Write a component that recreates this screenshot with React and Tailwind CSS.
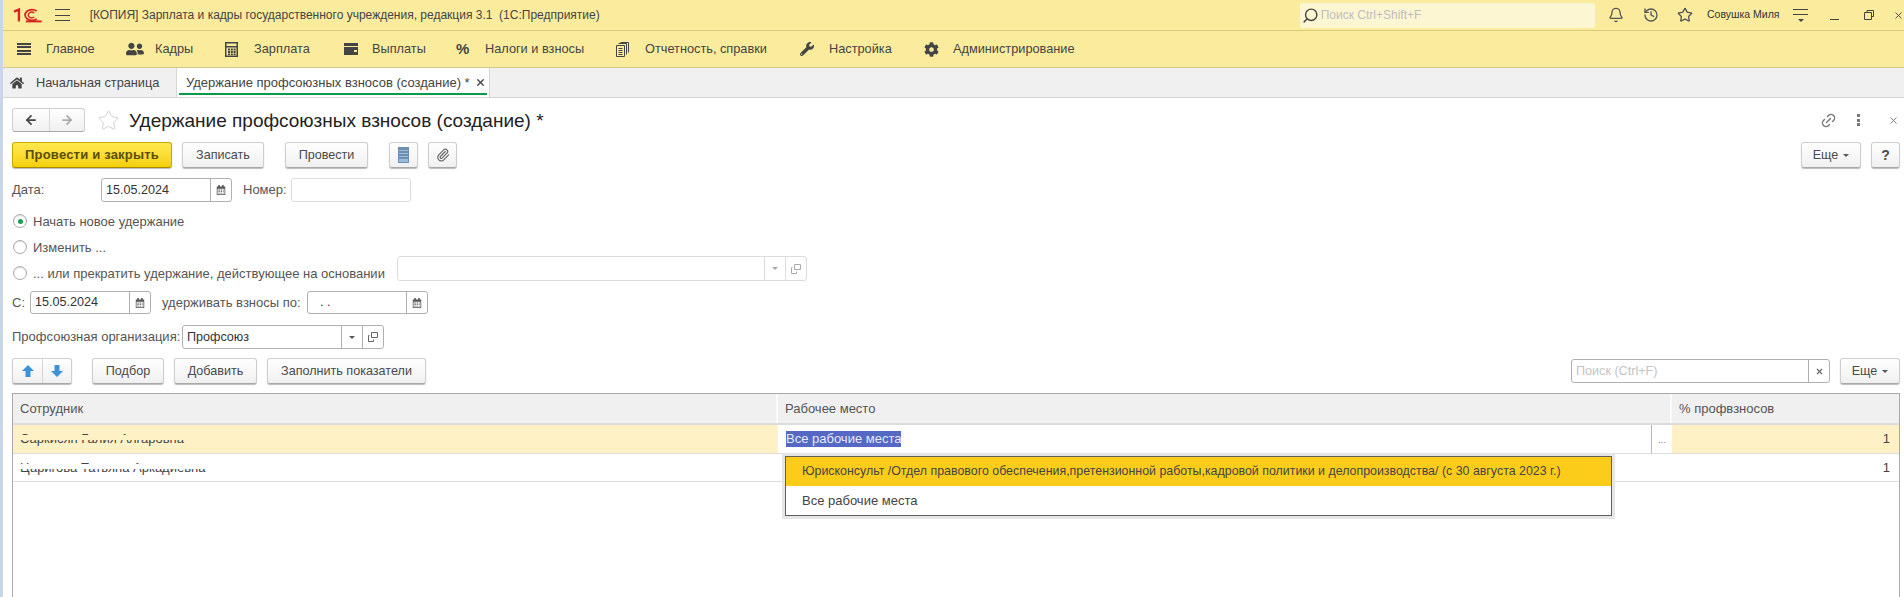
import React from 'react';
import { FaHome, FaWrench, FaCog, FaUserFriends } from 'react-icons/fa';
import { Bell, History, Star, Link2, Search, X, Paperclip, ArrowLeft, ArrowRight } from 'lucide-react';

const Logo = () => (
  <svg width="30" height="16" viewBox="0 0 30 16" fill="none" stroke="#d8231f">
    <path d="M1 4.5 L6 2.5 V14.5" strokeWidth="2.4" />
    <path d="M24 4 A7 5.5 0 1 0 24 12" strokeWidth="1.8" />
    <path d="M21.5 6 A3.6 2.8 0 1 0 21.5 10" strokeWidth="1.4" />
    <path d="M13 14.5 H29" strokeWidth="2" />
  </svg>
);

const Burger = ({ bar = 'h-[1px] bg-[#444]', gap = 'gap-[4.5px]' }) => (
  <div className={`flex flex-col w-[15px] ${gap}`}>
    <div className={bar} />
    <div className={bar} />
    <div className={bar} />
  </div>
);

const MainMenu = () => (
  <div className="flex flex-col w-[14px] gap-[1.5px]">
    <div className="h-[2px] bg-[#444]" />
    <div className="h-[2px] bg-[#444]" />
    <div className="h-[2px] bg-[#444]" />
    <div className="h-[2px] bg-[#444]" />
  </div>
);

const CalcIcon = () => (
  <svg width="13" height="15" viewBox="0 0 13 15" fill="#444">
    <path d="M0 0h13v15H0z M1.5 1.5v2.5h10V1.5z M1.5 5.5v8h10v-8z" fillRule="evenodd" />
    <path d="M3 6.5h2v2H3zM5.8 6.5h2v2h-2zM8.6 6.5h2v2h-2zM3 9h2v2H3zM5.8 9h2v2h-2zM8.6 9h2v2h-2zM3 11.5h2v1.5H3zM5.8 11.5h2v1.5h-2zM8.6 11.5h2v1.5h-2z" />
  </svg>
);

const ReportIcon = () => (
  <svg width="13" height="15" viewBox="0 0 13 15" fill="none" stroke="#444">
    <path d="M0.5 3.5h8v11h-8z" />
    <path d="M2.5 6.5h4M2.5 8.5h4M2.5 10.5h4M2.5 12.5h4" />
    <path d="M2.5 1.5h8v11M4.5 0.5h8v10" />
  </svg>
);

const Wallet = () => (
  <svg width="16" height="12" viewBox="0 0 16 12" fill="#444">
    <path d="M1 0h14v3H1z" />
    <path d="M1 4h14v8H1z M11 7v2h3V7z" fillRule="evenodd" />
  </svg>
);

const RestoreIcon = () => (
  <svg width="10" height="10" viewBox="0 0 10 10" fill="none" stroke="#444">
    <path d="M3 2.5v-2h6.5v6h-2" />
    <path d="M0.5 2.5h7v7h-7z" />
  </svg>
);

const CalendarIcon = () => (
  <svg width="10" height="10" viewBox="0 0 13 13" fill="#555">
    <path d="M3 0h2v2h3V0h2v2h2v11H1V2h2z M2 5v7h9V5z" fillRule="evenodd" />
    <path d="M3 6h2v1H3zM6 6h2v1H6zM9 6h1v1H9zM3 8h2v1H3zM6 8h2v1H6zM9 8h1v1H9zM3 10h2v1H3zM6 10h2v1H6zM9 10h1v1H9z" />
  </svg>
);

const OpenIcon = ({ color = '#666' }) => (
  <svg width="10" height="10" viewBox="0 0 10 10" fill="none" stroke={color}>
    <path d="M3.5 0.5h6v5h-6z" />
    <path d="M1.5 3.5h-1v6h5v-2" />
  </svg>
);

const Caret = ({ color = '#555' }) => (
  <div className="w-0 h-0 border-x-[3px] border-x-transparent border-t-[3px]" style={{ borderTopColor: color }} />
);

const ArrowBlue = ({ down }) => (
  <svg width="14" height="14" viewBox="0 0 14 14" fill="#3b94d9" className={down ? 'rotate-180' : ''}>
    <path d="M7 1 L13 7 H9.5 V13 H4.5 V7 H1 Z" />
  </svg>
);

const Btn = ({ className = '', children }) => (
  <div className={`flex items-center justify-center h-[26px] rounded-[3px] border border-[#cfcfcf] border-b-[#a8a8a8] bg-gradient-to-b from-white to-[#f0f0f0] shadow-[0_1px_1px_#bbb] text-[12.6px] text-[#4a4a4a] ${className}`}>
    {children}
  </div>
);

const Field = ({ className = '', value, parts = [], light }) => (
  <div className={`flex h-full rounded-[3px] border bg-white text-[12.6px] text-[#333] ${light ? 'border-[#dcdcdc]' : 'border-[#b0b0b0]'} ${className}`}>
    <div className="flex-1 flex items-center pl-[4px] overflow-hidden">{value}</div>
    {parts.map((part, index) => (
      <div key={index} className={`w-[21px] flex items-center justify-center border-l ${light ? 'border-[#dcdcdc]' : 'border-[#b0b0b0]'}`}>
        {part}
      </div>
    ))}
  </div>
);

const Radio = ({ checked, label }) => (
  <div className="flex items-center">
    <div className="w-[14px] h-[14px] ml-[1px] rounded-full border border-[#a9a9a9] bg-white flex items-center justify-center shadow-[inset_0_1px_1px_#ddd]">
      {checked && <div className="w-[5px] h-[5px] rounded-full bg-[#12a150]" />}
    </div>
    <span className="ml-[6px] text-[13px] leading-none text-[#555]">{label}</span>
  </div>
);

// имена в исходнике частично закрыты полосой по середине строки
const Masked = ({ children, band }) => (
  <span className="relative">
    {children}
    <span className={`absolute left-0 right-0 top-[6px] h-[5px] ${band}`} />
  </span>
);

const nav = [
  { label: 'Главное', width: 'w-[109px]', icon: <MainMenu /> },
  { label: 'Кадры', width: 'w-[99px]', icon: <FaUserFriends size={18} color="#444" /> },
  { label: 'Зарплата', width: 'w-[118px]', icon: <CalcIcon /> },
  { label: 'Выплаты', width: 'w-[113px]', icon: <Wallet /> },
  { label: 'Налоги и взносы', width: 'w-[160px]', icon: <span className="text-[15px] font-bold text-[#444]">%</span> },
  { label: 'Отчетность, справки', width: 'w-[184px]', icon: <ReportIcon /> },
  { label: 'Настройка', width: 'w-[124px]', icon: <FaWrench size={14} color="#444" /> },
  { label: 'Администрирование', width: '', icon: <FaCog size={15} color="#444" /> },
];

const App = () => {
  return (
    <div className="h-[597px] w-[1904px] overflow-hidden flex flex-col bg-white border-l-[3px] border-[#c9d6ea] font-['Liberation_Sans',Arial,sans-serif]">
      {/* Заголовок окна */}
      <div className="h-[31px] shrink-0 flex items-center bg-[#fbec9d] border-b border-[#d8c97f] pl-[10px] overflow-hidden">
        <Logo />
        <div className="ml-[12px]"><Burger /></div>
        <span className="ml-[20px] text-[12px] text-[#444] whitespace-pre">[КОПИЯ] Зарплата и кадры государственного учреждения, редакция 3.1  (1С:Предприятие)</span>
        <div className="ml-[700px] w-[299px] h-[25px] rounded-[2px] bg-[#fdf6d2] flex items-center pl-[2px]">
          <Search size={17} color="#444" className="-scale-x-100" />
          <span className="ml-[2px] text-[12px] text-[#bdbdbd]">Поиск Ctrl+Shift+F</span>
        </div>
        <Bell size={16} color="#555" className="ml-[13px] shrink-0" />
        <History size={16} color="#555" className="ml-[19px] shrink-0" />
        <Star size={16} color="#555" className="ml-[18px] shrink-0" />
        <span className="ml-[14px] text-[10.5px] text-[#333] w-[72px] shrink-0 whitespace-nowrap">Совушка Миля</span>
        <div className="ml-[14px] flex flex-col items-center gap-[4px] w-[15px] shrink-0">
          <div className="h-[1px] w-full bg-[#444]" />
          <div className="h-[1px] w-full bg-[#444]" />
          <Caret color="#444" />
        </div>
        <div className="ml-[22px] mt-[8px] w-[9px] h-[1px] bg-[#444] shrink-0" />
        <div className="ml-[25px] shrink-0"><RestoreIcon /></div>
        <X size={11} color="#444" className="ml-[19px] shrink-0" />
      </div>

      {/* Разделы */}
      <div className="h-[37px] shrink-0 flex items-center bg-[#fbec9d] border-b border-[#d2c88f] pl-[14px]">
        {nav.map((item) => (
          <div key={item.label} className={`flex items-center ${item.width}`}>
            <div className="w-[29px] flex items-center">{item.icon}</div>
            <span className="text-[12.75px] text-[#444]">{item.label}</span>
          </div>
        ))}
      </div>

      {/* Вкладки */}
      <div className="h-[30px] shrink-0 flex bg-[#f0f0f0] border-b border-[#d6d6d6]">
        <div className="w-[173px] flex items-center pl-[7px]">
          <FaHome size={14} color="#444" />
          <span className="ml-[12px] text-[12.75px] text-[#444]">Начальная страница</span>
        </div>
        <div className="w-[314px] bg-white border-x border-[#d6d6d6] flex items-center pl-[9px] relative">
          <span className="text-[13px] text-[#444]">Удержание профсоюзных взносов (создание) *</span>
          <X size={11} color="#444" strokeWidth={3} className="ml-[5px]" />
          <div className="absolute left-[2px] right-[2px] bottom-[2px] h-[2px] bg-[#0a9a4a]" />
        </div>
      </div>

      {/* Форма документа */}
      <div className="flex-1 flex flex-col pl-[9px] pr-[4px]">
        <div className="mt-[10px] h-[24px] shrink-0 flex items-center">
          <div className="flex w-[73px] h-[24px] rounded-[3px] border border-[#cfcfcf] border-b-[#a8a8a8] bg-gradient-to-b from-white to-[#f0f0f0]">
            <div className="w-[37px] flex items-center justify-center border-r border-[#d6d6d6]">
              <ArrowLeft size={14} color="#444" strokeWidth={3} />
            </div>
            <div className="flex-1 flex items-center justify-center">
              <ArrowRight size={14} color="#aaa" strokeWidth={3} />
            </div>
          </div>
          <Star size={23} color="#cfcfcf" strokeWidth={1} className="ml-[12px]" />
          <h1 className="ml-[9px] text-[19px] leading-none text-[#222]">Удержание профсоюзных взносов (создание) *</h1>
          <Link2 size={17} color="#777" className="ml-auto mr-[20px] -rotate-45" />
          <div className="flex flex-col gap-[1.5px] mr-[28px]">
            <div className="w-[3px] h-[3px] bg-[#777]" />
            <div className="w-[3px] h-[3px] bg-[#777]" />
            <div className="w-[3px] h-[3px] bg-[#777]" />
          </div>
          <X size={11} color="#777" className="mr-[1px]" />
        </div>

        <div className="mt-[10px] shrink-0 flex items-center">
          <div className="flex items-center justify-center w-[160px] h-[26px] rounded-[3px] border border-[#c9a800] border-b-[#a58c00] bg-gradient-to-b from-[#ffe94d] to-[#f5cf00] shadow-[0_1px_1px_#bbb] text-[13px] tracking-[0.2px] font-bold text-[#5a4e00]">
            Провести и закрыть
          </div>
          <Btn className="ml-[10px] w-[82px]">Записать</Btn>
          <Btn className="ml-[21px] w-[83px]">Провести</Btn>
          <Btn className="ml-[21px] w-[29px]">
            <div className="w-[11px] h-[16px] flex flex-col gap-[1px] border border-[#6d8fb3] bg-[#9dbad6]">
              <div className="h-[2px] bg-[#6d8fb3]" />
              <div className="h-[2px] bg-[#6d8fb3]" />
              <div className="h-[2px] bg-[#6d8fb3]" />
              <div className="h-[2px] bg-[#6d8fb3]" />
            </div>
          </Btn>
          <Btn className="ml-[10px] w-[29px]"><Paperclip size={14} color="#666" /></Btn>
          <Btn className="ml-auto w-[60px] gap-[5px]">Еще <Caret /></Btn>
          <Btn className="ml-[10px] w-[29px] font-bold text-[14px]">?</Btn>
        </div>

        <div className="mt-[10px] h-[24px] shrink-0 flex items-center">
          <span className="w-[89px] text-[13px] text-[#555]">Дата:</span>
          <Field className="w-[131px]" value="15.05.2024" parts={[<CalendarIcon />]} />
          <span className="ml-[11px] w-[48px] text-[13px] text-[#555]">Номер:</span>
          <Field className="w-[120px]" light />
        </div>

        <div className="mt-[10px] h-[18px] shrink-0 flex items-center"><Radio checked label="Начать новое удержание" /></div>
        <div className="mt-[8px] h-[18px] shrink-0 flex items-center"><Radio label="Изменить ..." /></div>
        <div className="h-[25px] shrink-0 flex items-end">
          <div className="pb-[1px] w-[385px]"><Radio label="... или прекратить удержание, действующее на основании" /></div>
          <Field className="w-[410px]" light parts={[<Caret color="#aaa" />, <OpenIcon color="#aaa" />]} />
        </div>

        <div className="mt-[10px] h-[23px] shrink-0 flex items-center">
          <span className="w-[18px] text-[13px] text-[#555]">С:</span>
          <Field className="w-[121px]" value="15.05.2024" parts={[<CalendarIcon />]} />
          <span className="ml-[11px] w-[145px] text-[13px] text-[#555]">удерживать взносы по:</span>
          <Field className="w-[121px]" value={<span className="pl-[8px]">.   .</span>} parts={[<CalendarIcon />]} />
        </div>

        <div className="mt-[11px] h-[24px] shrink-0 flex items-center">
          <span className="w-[170px] text-[13px] text-[#555]">Профсоюзная организация:</span>
          <Field className="w-[202px]" value="Профсоюз" parts={[<Caret />, <OpenIcon />]} />
        </div>

        <div className="mt-[9px] shrink-0 flex items-center">
          <div className="flex w-[60px] h-[26px] rounded-[3px] border border-[#cfcfcf] border-b-[#a8a8a8] bg-gradient-to-b from-white to-[#f0f0f0] shadow-[0_1px_1px_#bbb]">
            <div className="w-[30px] flex items-center justify-center border-r border-[#d6d6d6]"><ArrowBlue /></div>
            <div className="flex-1 flex items-center justify-center"><ArrowBlue down /></div>
          </div>
          <Btn className="ml-[20px] w-[72px]">Подбор</Btn>
          <Btn className="ml-[10px] w-[83px]">Добавить</Btn>
          <Btn className="ml-[10px] w-[159px]">Заполнить показатели</Btn>
          <div className="ml-auto h-[24px]">
            <Field className="w-[259px]" value={<span className="text-[#c4c4c4]">Поиск (Ctrl+F)</span>} parts={[<X size={9} color="#666" strokeWidth={3} />]} />
          </div>
          <Btn className="ml-[10px] w-[60px] gap-[5px]">Еще <Caret /></Btn>
        </div>

        {/* Таблица */}
        <div className="mt-[9px] flex-1 relative border-t border-x border-[#a9a9a9]">
          <div className="grid grid-cols-[765px_894px_1fr] h-[31px] bg-[#f0f0f0] border-b-2 border-[#dcdcdc] text-[13px] text-[#555]">
            <div className="pl-[7px] flex items-center border-r-2 border-[#fafafa]">Сотрудник</div>
            <div className="pl-[7px] flex items-center border-r-2 border-[#fafafa]">Рабочее место</div>
            <div className="pl-[7px] flex items-center">% профвзносов</div>
          </div>
          <div className="grid grid-cols-[765px_894px_1fr] h-[29px] border-b border-[#dcdcdc] text-[13px] text-[#444]">
            <div className="bg-[#fdf1c5] pl-[7px] flex items-center"><Masked band="bg-[#fdf1c5]">Саркисян Галия Алгаровна</Masked></div>
            <div className="flex items-center pl-[8px]">
              <span className="bg-[#5468c4] text-[#e6e9f7] h-[16px] leading-[16px]">Все рабочие места</span>
              <div className="ml-auto w-[21px] h-full border-l border-[#b8b8b8] flex items-end justify-center pb-[6px] text-[9px] text-[#777]">...</div>
            </div>
            <div className="bg-[#fdf1c5] flex items-center justify-end pr-[9px]">1</div>
          </div>
          <div className="grid grid-cols-[765px_894px_1fr] h-[28px] border-b border-[#dcdcdc] text-[13px] text-[#444]">
            <div className="pl-[7px] flex items-center"><Masked band="bg-white">Царигова Татьяна Аркадиевна</Masked></div>
            <div />
            <div className="flex items-center justify-end pr-[9px]">1</div>
          </div>

          {/* Выпадающий список */}
          <div className="absolute left-[772px] top-[62px] w-[827px] h-[60px] bg-white border border-[#5f5f5f] shadow-[0_0_0_3px_#e6e6e6] text-[12.4px] text-[#444]">
            <div className="h-[29px] pl-[16px] flex items-center bg-[#fbcc1a]">Юрисконсульт /Отдел правового обеспечения,претензионной работы,кадровой политики и делопроизводства/ (с 30 августа 2023 г.)</div>
            <div className="h-[29px] pl-[16px] flex items-center text-[13px]">Все рабочие места</div>
          </div>
        </div>
      </div>
    </div>
  );
};

export default App;
